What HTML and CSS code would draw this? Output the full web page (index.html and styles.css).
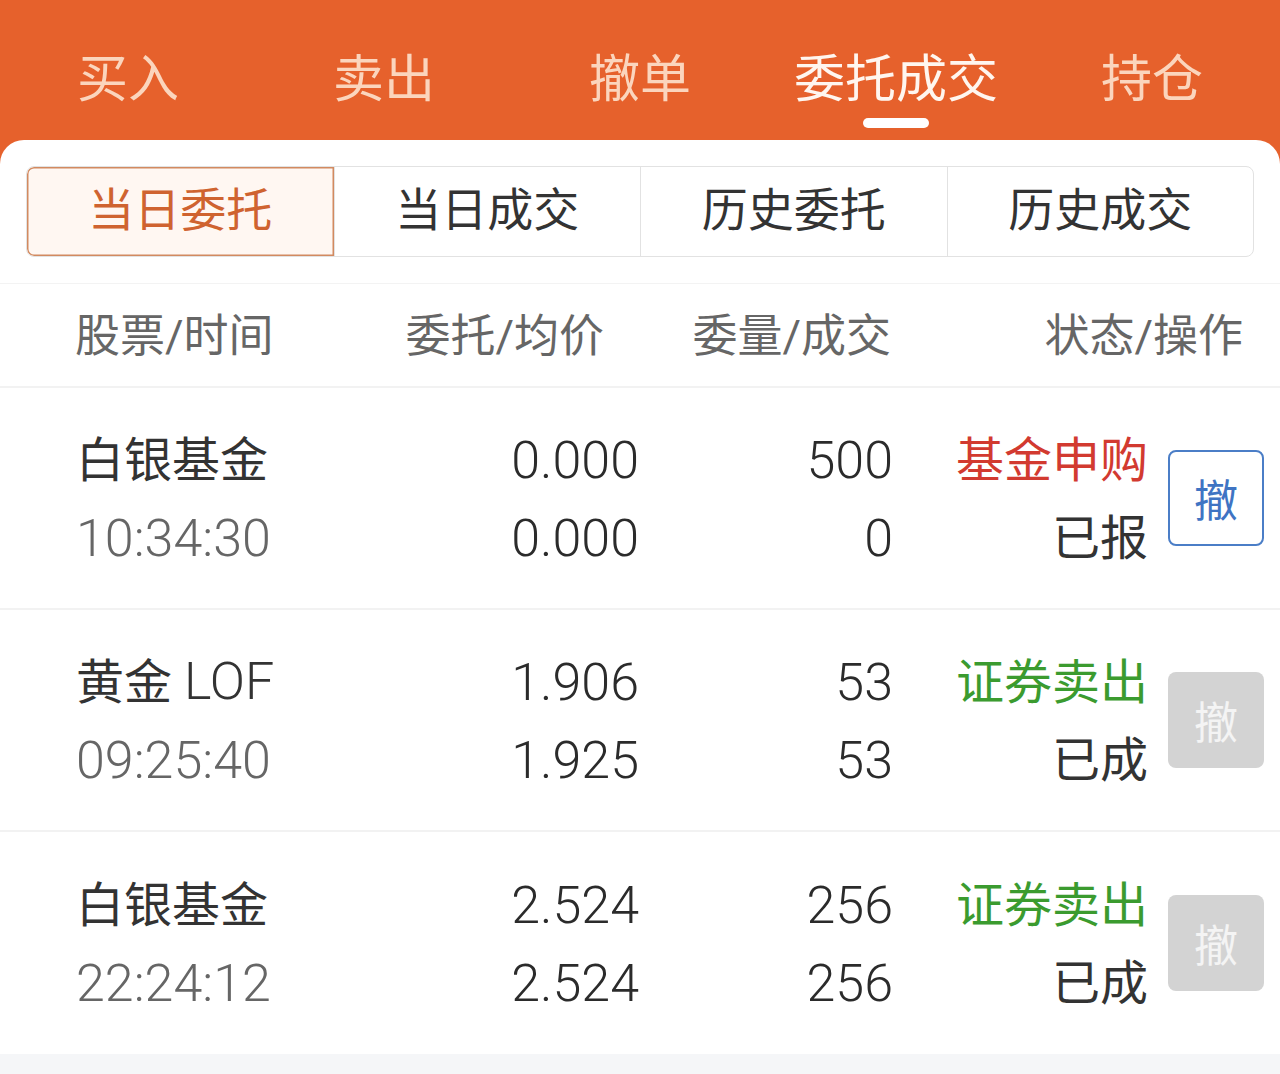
FILE: index.html
```html
<!DOCTYPE html>
<html lang="zh-CN">
<head>
<meta charset="utf-8">
<title>委托成交</title>
<link rel="stylesheet" href="styles.css">
</head>
<body>
<div class="app">
  <header class="topbar">
    <nav class="tabs">
      <div class="tab">买入</div>
      <div class="tab">卖出</div>
      <div class="tab">撤单</div>
      <div class="tab active">委托成交<span class="indicator"></span></div>
      <div class="tab">持仓</div>
    </nav>
  </header>
  <main class="panel">
    <div class="seg-wrap">
      <div class="seg">
        <div class="seg-item on">当日委托</div>
        <div class="seg-item">当日成交</div>
        <div class="seg-item">历史委托</div>
        <div class="seg-item">历史成交</div>
      </div>
    </div>
    <div class="thead">
      <div class="th left">股票/时间</div>
      <div class="th">委托/均价</div>
      <div class="th">委量/成交</div>
      <div class="th">状态/操作</div>
    </div>
    <div class="row">
      <div class="cell left"><span class="name">白银基金</span><span class="time n">10:34:30</span></div>
      <div class="cell num"><span class="n">0.000</span><span class="n">0.000</span></div>
      <div class="cell num"><span class="n">500</span><span class="n">0</span></div>
      <div class="cell num"><span class="red">基金申购</span><span>已报</span></div>
      <div class="btn blue">撤</div>
    </div>
    <div class="row">
      <div class="cell left"><span class="name">黄金 <span class="n">LOF</span></span><span class="time n">09:25:40</span></div>
      <div class="cell num"><span class="n">1.906</span><span class="n">1.925</span></div>
      <div class="cell num"><span class="n">53</span><span class="n">53</span></div>
      <div class="cell num"><span class="green">证券卖出</span><span>已成</span></div>
      <div class="btn gray">撤</div>
    </div>
    <div class="row">
      <div class="cell left"><span class="name">白银基金</span><span class="time n">22:24:12</span></div>
      <div class="cell num"><span class="n">2.524</span><span class="n">2.524</span></div>
      <div class="cell num"><span class="n">256</span><span class="n">256</span></div>
      <div class="cell num"><span class="green">证券卖出</span><span>已成</span></div>
      <div class="btn gray">撤</div>
    </div>
  </main>
  <div class="footer-space"></div>
</div>
</body>
</html>
```

FILE: styles.css
```css
* { box-sizing: border-box; }
html, body { margin: 0; padding: 0; }
body {
  background: #f5f6f8;
  font-family: Roboto, "Noto Sans CJK SC", "Noto Sans", sans-serif;
  color: #333;
}
.app { width: 1280px; }
.topbar {
  background: #e6612c;
  height: 164px;
}
.tabs {
  display: grid;
  grid-template-columns: repeat(5, 1fr);
  height: 140px;
}
.tab {
  position: relative;
  text-align: center;
  font-size: 51px;
  line-height: 50px;
  padding-top: 55px;
  color: #fbd5bd;
}
.tab.active { color: #fff6ef; }
.indicator {
  position: absolute;
  left: 50%;
  top: 118px;
  width: 66px;
  height: 10px;
  margin-left: -33px;
  background: #fff;
  border-radius: 5px;
}
.panel {
  margin-top: -24px;
  background: #fff;
  border-radius: 24px 24px 0 0;
  position: relative;
}
.seg-wrap {
  padding: 26px 26px 26px 26px;
  border-bottom: 1px solid #f3f3f3;
}
.seg {
  display: grid;
  grid-template-columns: repeat(4, 1fr);
  height: 91px;
  border: 1.5px solid #e2e2e2;
  border-radius: 8px;
  overflow: hidden;
}
.seg-item {
  display: flex;
  align-items: center;
  justify-content: center;
  font-size: 46px;
  line-height: 1;
  padding-bottom: 3px;
  color: #333;
  border-left: 1.5px solid #e2e2e2;
}
.seg-item:first-child { border-left: none; }
.seg-item.on {
  background: #fff7f2;
  color: #cf6330;
  box-shadow: inset 0 0 0 1.5px #d28a60;
  border-radius: 7px 0 0 7px;
}
.thead {
  display: grid;
  grid-template-columns: 300px 229px 287px 352px;
  padding-left: 75px;
  height: 104px;
  align-items: center;
  border-bottom: 2px solid #f2f2f2;
}
.th {
  font-size: 45px;
  line-height: 1;
  padding-top: 2px;
  color: #666;
  text-align: right;
}
.th.left { text-align: left; }
.row {
  display: grid;
  grid-template-columns: 301px 262px 254px 255px 96px;
  column-gap: 0;
  padding-left: 76px;
  height: 222px;
  align-items: center;
  border-bottom: 2px solid #f2f2f2;
}
.row:last-child { border-bottom: none; }
.cell {
  display: flex;
  flex-direction: column;
  align-items: flex-end;
  font-size: 48px;
  line-height: 78px;
  padding-top: 3px;
  color: #333;
}
.cell.left { align-items: flex-start; }
.n {
  font-family: Roboto, sans-serif;
  font-weight: 300;
  font-size: 52px;
  color: #2b2b2b;
}
.name { color: #333; }
.name .n { color: #333; }
.time, .time.n { color: #666; }
.red { color: #d23a30; }
.green { color: #3b9b2f; }
.btn {
  margin-left: 20px;
  width: 96px;
  height: 96px;
  border-radius: 8px;
  display: flex;
  align-items: center;
  justify-content: center;
  font-size: 44px;
}
.btn.blue {
  border: 2px solid #4b7ec7;
  color: #3f74c3;
  background: #fff;
}
.btn.gray {
  background: #d3d3d3;
  color: #f4f4f4;
}
.footer-space { height: 40px; background: #f5f6f8; }
```
